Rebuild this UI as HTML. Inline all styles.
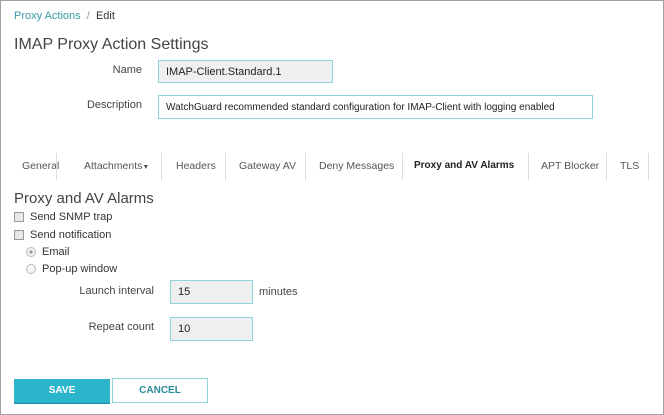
<!DOCTYPE html>
<html><head><style>
body{margin:0;width:664px;height:415px;overflow:hidden;font-family:"Liberation Sans",sans-serif;color:#333;background:#fff}
.frame{position:absolute;left:0;top:0;width:662px;height:413px;border:1px solid #a0a0a0}
.a{position:absolute;white-space:nowrap}
.in{position:absolute;border:1px solid #8fd3dc;background:#efefef;font-size:11px;color:#222;box-sizing:border-box;padding-left:7px;line-height:normal;display:flex;align-items:center;white-space:nowrap;overflow:hidden}
.lbl{position:absolute;font-size:11px;color:#444;text-align:right}
.tab{position:absolute;top:160px;font-size:10.5px;color:#555;white-space:nowrap}
.sep{position:absolute;top:153px;width:1px;height:27px;background:#ddd}
.cb{position:absolute;width:8px;height:8px;border:1px solid #999;background:#e8e8e8}
.rd{position:absolute;width:8px;height:8px;border:1px solid #bbb;border-radius:50%;background:#f4f4f4}
</style></head><body>
<div class="frame"></div>
<div class="a" style="left:14px;top:10px;font-size:11px;color:#3a9aa8">Proxy Actions <span style="color:#999">&nbsp;/&nbsp;</span> <span style="color:#333">Edit</span></div>
<div class="a" style="left:14px;top:36px;font-size:16px;color:#444">IMAP Proxy Action Settings</div>
<div class="lbl" style="left:60px;width:82px;top:64px">Name</div>
<div class="in" style="left:158px;top:60px;width:175px;height:23px">IMAP-Client.Standard.1</div>
<div class="lbl" style="left:60px;width:82px;top:99px">Description</div>
<div class="in" style="left:158px;top:95px;width:435px;height:24px;background:#fff;font-size:10px">WatchGuard recommended standard configuration for IMAP-Client with logging enabled</div>
<div class="tab" style="left:22px">General</div><div class="sep" style="left:56px"></div>
<div class="tab" style="left:84px">Attachments<span style="font-size:7px">▼</span></div><div class="sep" style="left:161px"></div>
<div class="tab" style="left:176px">Headers</div><div class="sep" style="left:225px"></div>
<div class="tab" style="left:239px">Gateway AV</div><div class="sep" style="left:305px"></div>
<div class="tab" style="left:319px">Deny Messages</div><div class="sep" style="left:402px"></div>
<div class="tab" style="left:414px;font-weight:bold;color:#222;font-size:10px">Proxy and AV Alarms</div><div class="sep" style="left:528px"></div>
<div class="tab" style="left:541px">APT Blocker</div><div class="sep" style="left:606px"></div>
<div class="tab" style="left:620px">TLS</div><div class="sep" style="left:648px"></div>
<div class="a" style="left:14px;top:190px;font-size:15px;color:#444">Proxy and AV Alarms</div>
<div class="cb" style="left:14px;top:212px"></div><div class="a" style="left:30px;top:211px;font-size:11px">Send SNMP trap</div>
<div class="cb" style="left:14px;top:230px"></div><div class="a" style="left:30px;top:229px;font-size:11px">Send notification</div>
<div class="rd" style="left:26px;top:247px;background:radial-gradient(circle,#999 25%,#f4f4f4 35%)"></div><div class="a" style="left:42px;top:246px;font-size:11px">Email</div>
<div class="rd" style="left:26px;top:264px"></div><div class="a" style="left:42px;top:263px;font-size:11px">Pop-up window</div>
<div class="lbl" style="left:60px;width:94px;top:285px">Launch interval</div>
<div class="in" style="left:170px;top:280px;width:83px;height:24px">15</div>
<div class="a" style="left:259px;top:286px;font-size:11px;color:#444">minutes</div>
<div class="lbl" style="left:60px;width:94px;top:321px">Repeat count</div>
<div class="in" style="left:170px;top:317px;width:83px;height:24px">10</div>
<div class="a" style="left:14px;top:379px;width:96px;height:24px;background:#2bb5cb;border-bottom:1px solid #1c8fa2;color:#fff;font-size:10px;font-weight:bold;text-align:center;line-height:24px">SAVE</div>
<div class="a" style="left:112px;top:378px;width:94px;height:23px;border:1px solid #8fd3dc;color:#2a8a9a;font-size:10px;font-weight:bold;text-align:center;line-height:23px">CANCEL</div>
</body></html>
